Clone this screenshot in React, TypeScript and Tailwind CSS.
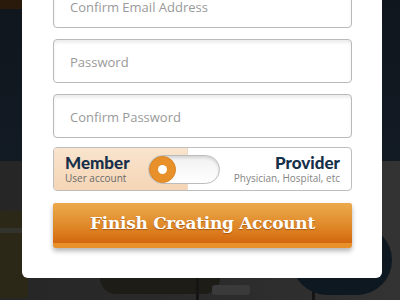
import React from "react";

function Field({ label }: { label: string }) {
  return (
    <div className="h-[44px] w-[299px] shrink-0 rounded-[4px] border border-[#b9b9b9] bg-white shadow-[inset_0_3px_3px_rgba(0,0,0,0.07)] flex items-center pl-[16px] pt-[3px]">
      <span className="text-[13px] text-[#9a9a9a] [font-family:'Open_Sans',sans-serif]">{label}</span>
    </div>
  );
}

export default function App() {
  return (
    <div className="relative w-[400px] h-[300px] overflow-hidden bg-[#2a2a2a]">
      {/* background picture */}
      <div className="flex flex-col h-full">
        <div className="h-[161px] bg-[linear-gradient(180deg,#0f161e,#121a23)]" />
        <div className="flex-1 bg-[linear-gradient(90deg,#262626,#2c2c2c_60%,#333333)]" />
      </div>
      <div className="absolute left-0 top-0 w-[30px] h-[9px] bg-[#2a1a0b]" />
      <div className="absolute left-0 top-[211px] w-[28px] h-[87px] bg-[#2b2818] rounded-br-[4px]" />
      <div className="absolute left-0 top-[228px] w-[28px] h-[5px] bg-[#33332e]" />
      <div className="absolute left-[100px] top-[262px] w-[120px] h-[32px] rounded-full bg-[#1d1c17]" />
      <div className="absolute left-[196px] top-[270px] w-[3px] h-[30px] bg-[#151515]" />
      <div className="absolute left-[312px] top-[270px] w-[3px] h-[30px] bg-[#151515]" />
      <div className="absolute left-[212px] top-[285px] w-[38px] h-[10px] rounded-[3px] bg-[#3a3a3a]" />
      <div className="absolute left-[292px] top-[225px] w-[100px] h-[70px] rounded-full bg-[#0e1820]" />

      {/* card */}
      <div className="absolute left-[22px] top-[-30px] w-[360px] h-[308px] rounded-[6px] bg-white pt-[14px] pl-[31px] flex flex-col">
        <Field label="Confirm Email Address" />
        <div className="h-[11px] shrink-0" />
        <Field label="Password" />
        <div className="h-[11px] shrink-0" />
        <Field label="Confirm Password" />
        <div className="h-[9px] shrink-0" />

        {/* account type */}
        <div className="h-[44px] w-[299px] shrink-0 rounded-[4px] border border-[#bdbdbd] bg-white flex overflow-hidden">
          <div className="w-[134px] shrink-0 bg-[linear-gradient(180deg,#f9e4cd,#f5d5b6)] border-r border-[#eadbcc] pl-[11px] flex flex-col justify-center">
            <span className="text-[17px] leading-[18px] font-black text-[#16304a] [font-family:Lato,sans-serif]">Member</span>
            <span className="text-[10px] leading-[12px] text-[#6a6a6a] [font-family:'Open_Sans',sans-serif]">User account</span>
          </div>
          <div className="ml-[-40px] self-center h-[29px] w-[72px] shrink-0 rounded-full border border-[#bcbcbc] bg-[linear-gradient(180deg,#f1f1f1,#ffffff)] shadow-[inset_0_2px_3px_rgba(0,0,0,0.12)] flex items-center">
            <div className="h-[27px] w-[27px] rounded-full bg-[#e8902a] border border-[#d98020] flex items-center justify-center">
              <div className="h-[9px] w-[9px] rounded-full bg-white" />
            </div>
          </div>
          <div className="flex-1 flex flex-col items-end justify-center pr-[11px]">
            <span className="text-[17px] leading-[18px] font-black text-[#16304a] [font-family:Lato,sans-serif]">Provider</span>
            <span className="text-[10px] leading-[12px] text-[#858585] [font-family:'Open_Sans',sans-serif]">Physician, Hospital, etc</span>
          </div>
        </div>

        <div className="h-[12px] shrink-0" />
        <button className="h-[45px] w-[299px] shrink-0 rounded-[3px] bg-[#e8902a] shadow-[0_3px_5px_rgba(0,0,0,0.3)] flex flex-col overflow-hidden">
          <div className="h-[40px] w-full rounded-t-[3px] bg-[linear-gradient(180deg,#ebaa4c,#e08a2a_55%,#d4670f)] flex items-center justify-center pt-[1px]">
            <span className="text-[17px] font-bold text-white [font-family:'DejaVu_Serif',serif] [text-shadow:0_1px_1px_rgba(120,50,0,0.5)] tracking-[-0.3px]">Finish Creating Account</span>
          </div>
        </button>
      </div>
    </div>
  );
}
